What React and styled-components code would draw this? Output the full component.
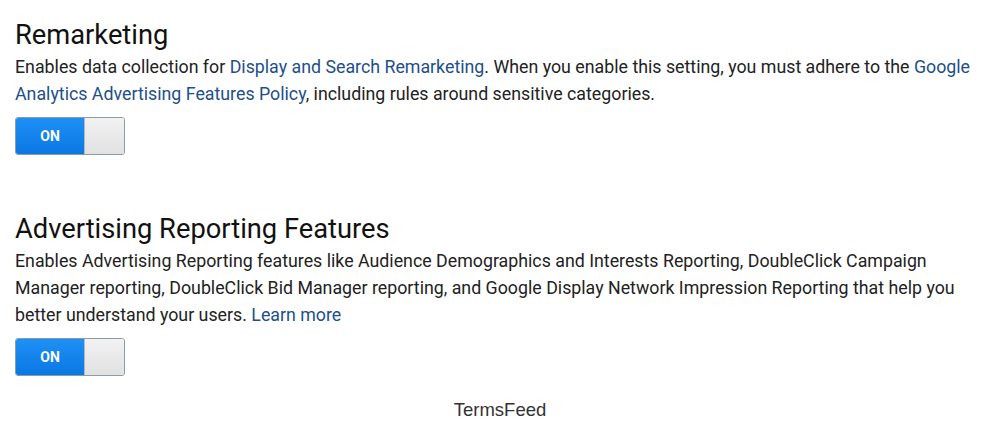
import styled, { createGlobalStyle } from "styled-components";

const Global = createGlobalStyle`
  body {
    margin: 0;
    background: #fff;
    font-family: Roboto, "Noto Sans", sans-serif;
  }
`;

const Page = styled.div`
  width: 1000px;
  height: 428px;
  padding: 17px 15px 0;
  box-sizing: border-box;
  display: flex;
  flex-direction: column;
`;

const Section = styled.section`
  display: flex;
  flex-direction: column;
  margin-bottom: ${(p) => p.gap || 0}px;
`;

const Title = styled.h2`
  margin: 0;
  font-size: 27.3px;
  font-weight: 400;
  color: #111;
  line-height: 36px;
`;

const Text = styled.p`
  margin: 0;
  width: 965px;
  font-size: 17.8px;
  line-height: 27px;
  color: #222;
`;

const Link = styled.a`
  color: #1d4f8a;
  text-decoration: none;
`;

const Toggle = styled.div`
  margin-top: 10px;
  width: 110px;
  height: 38px;
  display: flex;
  border-radius: 3px;
  overflow: hidden;
  border: 1px solid #8b9aa8;
  box-sizing: border-box;
`;

const OnPart = styled.div`
  width: 68px;
  display: flex;
  align-items: center;
  justify-content: center;
  background: linear-gradient(#1e90f5, #0a78e4);
  color: #fff;
  font-size: 14px;
  font-weight: 700;
`;

const Knob = styled.div`
  flex: 1;
  background: linear-gradient(#f2f2f2, #e1e1e1);
  border-left: 1px solid #b8b8b8;
`;

const Footer = styled.div`
  margin-top: auto;
  margin-bottom: 7px;
  text-align: center;
  font-family: "Liberation Sans", Arial, sans-serif;
  font-size: 18.5px;
  color: #333;
`;

export default function App() {
  return (
    <>
      <Global />
      <Page>
        <Section gap={56}>
          <Title>Remarketing</Title>
          <Text>
            Enables data collection for{" "}
            <Link href="#">Display and Search Remarketing</Link>. When you enable this setting, you must
            adhere to the{" "}
            <Link href="#">Google Analytics Advertising Features Policy</Link>, including rules around
            sensitive categories.
          </Text>
          <Toggle>
            <OnPart>ON</OnPart>
            <Knob />
          </Toggle>
        </Section>
        <Section>
          <Title>Advertising Reporting Features</Title>
          <Text>
            Enables Advertising Reporting features like Audience Demographics and Interests Reporting,
            DoubleClick Campaign Manager reporting, DoubleClick Bid Manager reporting, and Google Display
            Network Impression Reporting that help you better understand your users.{" "}
            <Link href="#">Learn more</Link>
          </Text>
          <Toggle>
            <OnPart>ON</OnPart>
            <Knob />
          </Toggle>
        </Section>
        <Footer>TermsFeed</Footer>
      </Page>
    </>
  );
}
